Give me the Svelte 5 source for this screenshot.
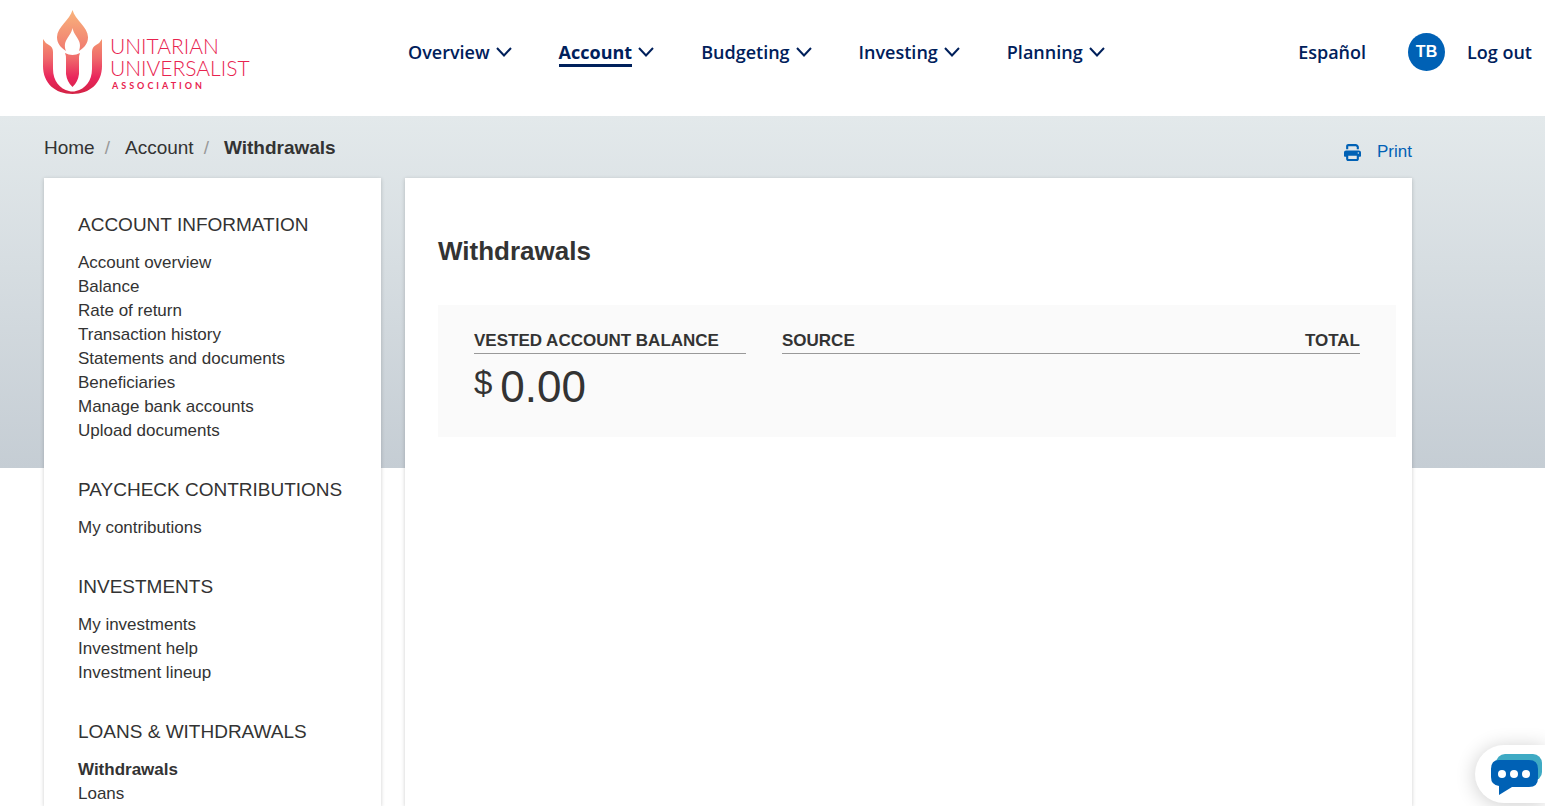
<script>
  const navItems = [
    { label: "Overview" },
    { label: "Account", active: true },
    { label: "Budgeting" },
    { label: "Investing" },
    { label: "Planning" },
  ];

  const sections = [
    {
      title: "Account information",
      links: [
        "Account overview",
        "Balance",
        "Rate of return",
        "Transaction history",
        "Statements and documents",
        "Beneficiaries",
        "Manage bank accounts",
        "Upload documents",
      ],
    },
    { title: "Paycheck contributions", links: ["My contributions"] },
    {
      title: "Investments",
      links: ["My investments", "Investment help", "Investment lineup"],
    },
    { title: "Loans & withdrawals", links: ["Withdrawals", "Loans"] },
  ];

  const current = "Withdrawals";
  const balance = "0.00";
</script>

<style>
  :global(body) {
    color: #333;
    background: #fff;
    font-family: "Liberation Sans", Arial, sans-serif;
    font-size: 17px;
    line-height: 24px;
  }

  a {
    color: inherit;
    text-decoration: none;
  }

  ul,
  ol {
    list-style: none;
    margin: 0;
    padding: 0;
  }

  .page {
    display: flex;
    flex-direction: column;
    min-height: 100vh;
  }

  .header {
    display: flex;
    align-items: center;
    box-sizing: border-box;
    height: 116px;
    padding: 0 13px 12px 42px;
    color: #00205b;
    font-family: "Open Sans", "Noto Sans", sans-serif;
    font-size: 18px;
    font-weight: 600;
  }

  .logo {
    display: flex;
    align-items: center;
    gap: 7px;
    width: 366px;
    color: #e8234f;
    font-family: Lato, sans-serif;
    font-weight: 300;
  }

  .logo-text {
    display: flex;
    flex-direction: column;
    padding-top: 24px;
    font-size: 21px;
    line-height: 22px;
    text-transform: uppercase;
  }

  .logo-text small {
    padding-left: 2px;
    font-size: 9px;
    font-weight: 700;
    line-height: 14px;
    letter-spacing: 3px;
  }

  .nav {
    display: flex;
    gap: 47px;
  }

  .nav button {
    display: flex;
    align-items: center;
    gap: 6px;
    padding: 0;
    border: 0;
    background: none;
    color: inherit;
    font: inherit;
    line-height: 24px;
    cursor: pointer;
  }

  .nav .active span {
    margin-bottom: -3px;
    border-bottom: 3px solid #00205b;
    font-weight: 700;
  }

  .user {
    display: flex;
    align-items: center;
    margin-left: auto;
  }

  .avatar {
    width: 37px;
    height: 38px;
    margin: 0 22px 0 42px;
    border-radius: 50%;
    background: #0061b5;
    color: #fff;
    font-family: "Liberation Sans", Arial, sans-serif;
    font-size: 16px;
    font-weight: 700;
    line-height: 38px;
    text-align: center;
  }

  .body {
    display: flex;
    flex: 1;
    flex-direction: column;
    padding-left: 44px;
    background: linear-gradient(#e3e9eb, #c5cdd4) no-repeat;
    background-size: 100% 352px;
  }

  .top {
    display: flex;
    justify-content: space-between;
    max-width: 1368px;
    height: 62px;
  }

  .crumbs {
    display: flex;
    padding-top: 20px;
    font-size: 19px;
  }

  .crumbs li + li::before {
    content: "/";
    padding: 0 15px 0 10px;
    color: #999;
    font-weight: 400;
  }

  .print {
    display: flex;
    align-items: center;
    gap: 16px;
    height: 24px;
    padding-top: 24px;
    color: #0061b5;
  }

  .columns {
    display: grid;
    flex: 1;
    grid-template-columns: 337px 1fr;
    gap: 24px;
    max-width: 1368px;
  }

  .panel {
    background: #fff;
    box-shadow: 0 1px 4px rgba(0, 0, 0, 0.2);
  }

  .sidebar {
    padding: 34px 20px 0 34px;
  }

  .sidebar h2 {
    margin: 0 0 14px;
    font-size: 19px;
    font-weight: 400;
    line-height: 25px;
    text-transform: uppercase;
    white-space: nowrap;
  }

  .sidebar ul {
    margin-bottom: 34px;
  }

  .sidebar section:last-child ul {
    margin-bottom: 0;
  }

  .current {
    font-weight: 700;
  }

  .content {
    padding: 57px 16px 0 33px;
  }

  h1 {
    margin: 0 0 38px;
    font-size: 26px;
    line-height: 32px;
  }

  .summary {
    display: grid;
    grid-template-columns: 32fr 68fr;
    gap: 36px;
    align-items: start;
    padding: 23px 36px 22px;
    background: #fafafa;
  }

  .summary h2,
  th {
    margin: 0;
    padding: 0;
    border-bottom: 1px solid #999;
    font-size: 17px;
    font-weight: 700;
    line-height: 25px;
    text-align: left;
    text-transform: uppercase;
  }

  table {
    width: 100%;
    border-spacing: 0;
  }

  th:last-child {
    text-align: right;
  }

  .amount {
    display: flex;
    gap: 8px;
    margin: 0;
    padding-top: 5px;
    font-size: 44px;
    line-height: 56px;
  }

  .amount span {
    font-size: 33px;
    line-height: 48px;
  }

  .chat {
    position: fixed;
    right: 0;
    bottom: 3px;
    width: 70px;
    height: 58px;
    padding: 0;
    border: 0;
    border-radius: 29px 0 0 29px;
    background: #fff;
    box-shadow: 0 2px 20px rgba(0, 0, 0, 0.2);
    cursor: pointer;
  }

  svg {
    display: block;
    flex: none;
  }
</style>

<div class="page">
  <header class="header">
    <a class="logo" href="#home">
      <svg width="61" height="86" viewBox="0 0 61 86" aria-hidden="true">
        <defs>
          <linearGradient id="flame" x1="0" y1="0" x2="0" y2="1">
            <stop offset="0" stop-color="#f9b47c" />
            <stop offset="1" stop-color="#f07a70" />
          </linearGradient>
          <linearGradient id="cup" gradientUnits="userSpaceOnUse" x1="0" y1="30" x2="0" y2="85">
            <stop offset="0" stop-color="#f4966f" />
            <stop offset="0.35" stop-color="#ef6a6c" />
            <stop offset="0.7" stop-color="#e9265c" />
            <stop offset="1" stop-color="#d32345" />
          </linearGradient>
        </defs>
        <path
          fill="url(#flame)"
          d="M30.500 1C28 11 15 18 15 28C15 34 18 38 24 42C20 31 29 28 30.500 19C32 28 41 31 37 42C43 38 46 34 46 28C46 18 33 11 30.500 1Z"
        />
        <path
          fill="url(#cup)"
          d="M1 30Q3 34 7 36Q11 38 11 43V60C11 72 18 80 27 82Q30.500 83 34 82C43 80 50 72 50 60V43Q50 38 54 36Q58 34 60 30V57C60 74 48 85 30.500 85C13 85 1 74 1 57Z"
        />
        <path
          fill="url(#cup)"
          d="M23 44Q30.500 48 38 44Q37 46 37 50V65Q36 73 30.500 78Q25 73 24 65V50Q24 46 23 44Z"
        />
      </svg>
      <span class="logo-text">
        <span>Unitarian</span>
        <span>Universalist</span>
        <small>Association</small>
      </span>
    </a>

    <nav class="nav">
      {#each navItems as item}
        <button class:active={item.active}>
          <span>{item.label}</span>
          <svg width="16" height="10" viewBox="0 0 16 10" fill="none" stroke="currentColor" stroke-width="2" aria-hidden="true">
            <path d="M1 1L8 8.500L15 1" />
          </svg>
        </button>
      {/each}
    </nav>

    <div class="user">
      <a href="#es">Español</a>
      <a class="avatar" href="#profile">TB</a>
      <a href="#logout">Log out</a>
    </div>
  </header>

  <div class="body">
    <div class="top">
      <ol class="crumbs">
        <li><a href="#home">Home</a></li>
        <li><a href="#account">Account</a></li>
        <li class="current">{current}</li>
      </ol>
      <a class="print" href="#print">
        <svg width="17" height="17" viewBox="0 0 512 512" fill="currentColor" aria-hidden="true">
          <path
            d="M128 0C92.700 0 64 28.700 64 64v96h64V64h226.700L384 93.300V160h64V93.300c0-17-6.700-33.300-18.700-45.300L400 18.700C388 6.700 371.700 0 354.700 0H128zM384 352v96H128v-96h256zm64 32h32c17.700 0 32-14.300 32-32v-96c0-35.300-28.700-64-64-64H64c-35.300 0-64 28.700-64 64v96c0 17.700 14.300 32 32 32h32v64c0 35.300 28.700 64 64 64h256c35.300 0 64-28.700 64-64v-64zm-16-88a24 24 0 1 1 0-48 24 24 0 1 1 0 48z"
          />
        </svg>
        Print
      </a>
    </div>

    <div class="columns">
      <aside class="panel sidebar">
        {#each sections as section}
          <section>
            <h2>{section.title}</h2>
            <ul>
              {#each section.links as link}
                <li><a class:current={link === current} href="#link">{link}</a></li>
              {/each}
            </ul>
          </section>
        {/each}
      </aside>

      <main class="panel content">
        <h1>{current}</h1>
        <div class="summary">
          <div>
            <h2>Vested account balance</h2>
            <p class="amount"><span>$</span>{balance}</p>
          </div>
          <table>
            <thead>
              <tr>
                <th>Source</th>
                <th>Total</th>
              </tr>
            </thead>
          </table>
        </div>
      </main>
    </div>
  </div>

  <button class="chat" aria-label="Chat">
    <svg width="70" height="58" viewBox="0 0 70 58" aria-hidden="true">
      <rect x="21" y="9" width="46" height="27" rx="9" fill="#3eaac4" />
      <path
        fill="#0061b5"
        d="M24 15H54Q63 15 63 24V33Q63 42 54 42H37L24 50V41Q16 40 16 32V24Q16 15 24 15Z"
      />
      <g fill="#fff">
        <circle cx="27" cy="29" r="4" />
        <circle cx="39" cy="29" r="4" />
        <circle cx="51" cy="29" r="4" />
      </g>
    </svg>
  </button>
</div>
